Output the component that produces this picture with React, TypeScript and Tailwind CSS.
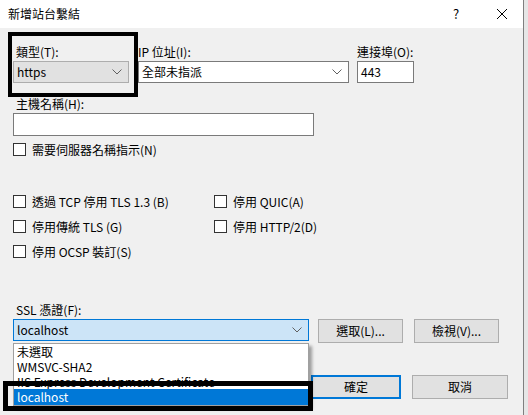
import React from "react";

const font = { fontFamily: '"Noto Sans CJK TC", "Noto Sans", sans-serif' };

const Chevron = () => (
  <svg width="10" height="6" viewBox="0 0 10 6" className="shrink-0">
    <path d="M0.5 0.5 L5 5 L9.5 0.5" fill="none" stroke="#606060" strokeWidth="1" />
  </svg>
);

const Check = ({ label }: { label: string }) => (
  <div className="flex items-center h-[25px]">
    <div className="w-[13px] h-[13px] bg-white border border-[#333333] shrink-0" />
    <span className="ml-[6px] text-[12px] leading-none">{label}</span>
  </div>
);

const Btn = ({ label, w, primary }: { label: string; w: string; primary?: boolean }) => (
  <div
    className={`${w} h-full flex items-center justify-center bg-[#e1e1e1] text-[12px] ${
      primary ? "border-2 border-[#0078d7]" : "border border-[#adadad]"
    }`}
  >
    {label}
  </div>
);

export default function App() {
  const items = ["未選取", "WMSVC-SHA2", "IIS Express Development Certificate"];

  return (
    <div className="relative w-[528px] h-[415px] overflow-hidden bg-[#e6e6e6] flex text-black" style={font}>
      <div className="w-[524px] h-full flex flex-col bg-[#f0f0f0] border-r border-[#7f7f7f]">
        {/* title bar */}
        <div className="h-[28px] bg-white flex items-center pl-[8px] text-[12px]">
          <span>新增站台繫結</span>
          <span className="ml-auto text-[13px] w-[8px]">?</span>
          <svg width="10" height="10" viewBox="0 0 10 10" className="ml-[36px] mr-[16px]">
            <path d="M0 0 L10 10 M10 0 L0 10" stroke="#000" strokeWidth="1" />
          </svg>
        </div>

        <div className="flex-1 flex flex-col px-[13px] pt-[15px] text-[12px]">
          {/* binding row */}
          <div className="flex">
            <div className="w-[116px] flex flex-col">
              <div className="h-[18px] pl-[3px]">類型(T):</div>
              <div className="h-[22px] bg-[#e1e1e1] border border-[#adadad] flex items-center pl-[3px] pr-[6px]">
                <span className="flex-1">https</span>
                <Chevron />
              </div>
            </div>
            <div className="w-[211px] ml-[9px] flex flex-col">
              <div className="h-[18px]">IP 位址(I):</div>
              <div className="h-[22px] bg-white border border-[#7a7a7a] flex items-center pl-[3px] pr-[6px]">
                <span className="flex-1">全部未指派</span>
                <Chevron />
              </div>
            </div>
            <div className="w-[57px] ml-[8px] flex flex-col">
              <div className="h-[18px]">連接埠(O):</div>
              <div className="h-[22px] bg-white border border-[#7a7a7a] flex items-center pl-[3px]">443</div>
            </div>
          </div>

          <div className="h-[18px] mt-[12px] pl-[3px]">主機名稱(H):</div>
          <div className="w-[301px] h-[23px] bg-white border border-[#7a7a7a]" />

          <div className="mt-[1px]">
            <Check label="需要伺服器名稱指示(N)" />
          </div>

          <div className="mt-[27px] grid grid-cols-[201px_1fr]">
            <Check label="透過 TCP 停用 TLS 1.3 (B)" />
            <Check label="停用 QUIC(A)" />
            <Check label="停用傳統 TLS (G)" />
            <Check label="停用 HTTP/2(D)" />
            <Check label="停用 OCSP 裝訂(S)" />
          </div>

          <div className="h-[18px] mt-[37px] pl-[3px]">SSL 憑證(F):</div>
          <div className="flex items-start h-[24px]">
            <div className="w-[296px] h-[22px] bg-[#cce4f7] border border-[#0078d7] flex items-center pl-[3px] pr-[6px]">
              <span className="flex-1">localhost</span>
              <Chevron />
            </div>
            <div className="ml-[9px] h-[24px] flex">
              <Btn label="選取(L)..." w="w-[85px]" />
            </div>
            <div className="ml-[11px] h-[24px] flex">
              <Btn label="檢視(V)..." w="w-[85px]" />
            </div>
          </div>

          <div className="flex h-[24px] mt-[32px] pl-[298px]">
            <Btn label="確定" w="w-[90px]" primary />
            <div className="ml-[11px] h-full flex">
              <Btn label="取消" w="w-[96px]" />
            </div>
          </div>
        </div>
      </div>

      {/* open dropdown list */}
      <div className="absolute left-[13px] top-[343px] w-[296px] bg-white border border-[#a0a0a0] shadow-[3px_3px_3px_rgba(0,0,0,0.35)] text-[12px]">
        {items.map((it) => (
          <div key={it} className="h-[15px] leading-[15px] pl-[3px] whitespace-nowrap overflow-hidden">
            {it}
          </div>
        ))}
        <div className="h-[16px] leading-[16px] pl-[3px] bg-[#0078d7] text-white">localhost</div>
      </div>

      {/* annotation boxes */}
      <div className="absolute left-[8px] top-[32px] w-[130px] h-[65px] border-4 border-black" />
      <div className="absolute left-[3px] top-[381px] w-[310px] h-[30px] border-[5px] border-black" />
    </div>
  );
}
